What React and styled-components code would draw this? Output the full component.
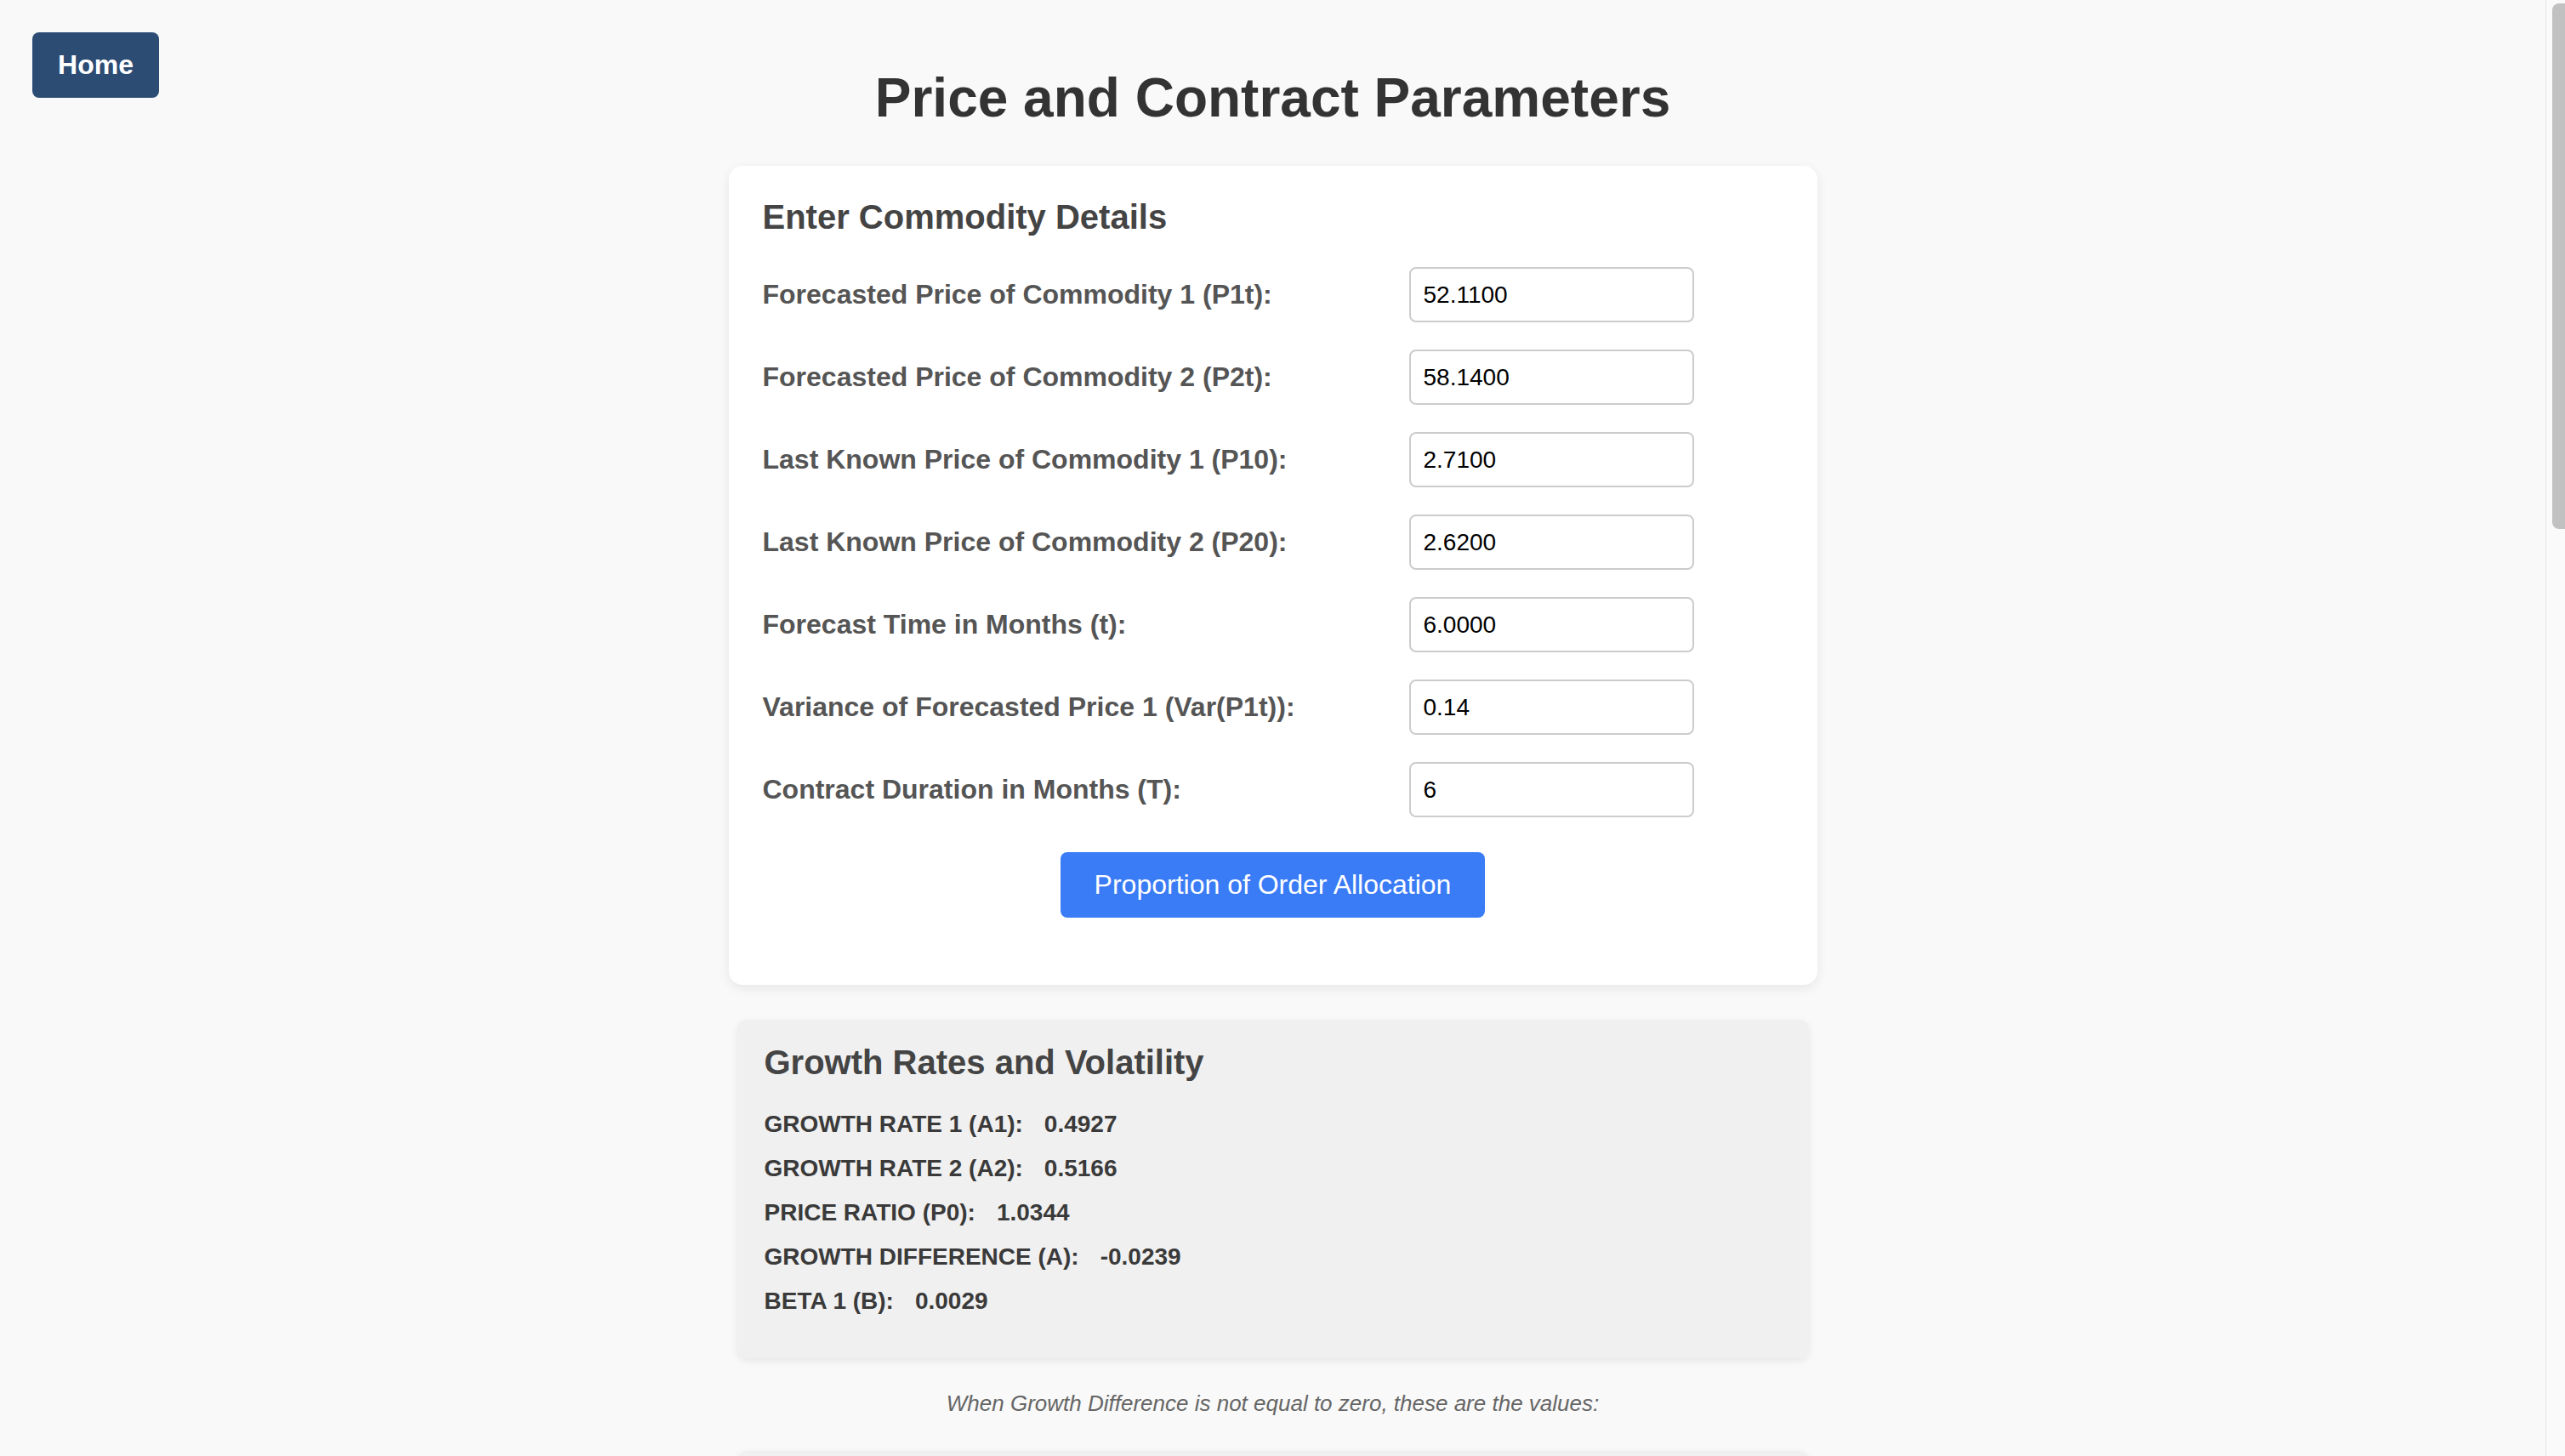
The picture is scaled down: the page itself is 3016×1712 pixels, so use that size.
import React from "react";
import styled, { createGlobalStyle } from "styled-components";

const GlobalStyle = createGlobalStyle`
  html,
  body {
    margin: 0;
    padding: 0;
    background: #f9f9f9;
    scrollbar-width: none;
  }
  body {
    font-family: "Liberation Sans", Arial, Helvetica, sans-serif;
    color: #333;
  }
  ::-webkit-scrollbar {
    display: none;
  }
`;

const fields = [
  { label: "Forecasted Price of Commodity 1 (P1t):", value: "52.1100" },
  { label: "Forecasted Price of Commodity 2 (P2t):", value: "58.1400" },
  { label: "Last Known Price of Commodity 1 (P10):", value: "2.7100" },
  { label: "Last Known Price of Commodity 2 (P20):", value: "2.6200" },
  { label: "Forecast Time in Months (t):", value: "6.0000" },
  { label: "Variance of Forecasted Price 1 (Var(P1t)):", value: "0.14" },
  { label: "Contract Duration in Months (T):", value: "6" },
];

const growth = [
  { label: "Growth Rate 1 (A1):", value: "0.4927" },
  { label: "Growth Rate 2 (A2):", value: "0.5166" },
  { label: "Price Ratio (P0):", value: "1.0344" },
  { label: "Growth Difference (A):", value: "-0.0239" },
  { label: "Beta 1 (B):", value: "0.0029" },
];

const allocation = [
  { label: "Proportion to Supplier 1 (X1):", value: "0.4981" },
  { label: "Proportion to Supplier 2 (X2):", value: "0.5019" },
  { label: "Expected Cost Ratio (R):", value: "1.0012" },
];

const StatList = ({ items }) => (
  <Stats>
    {items.map(({ label, value }) => (
      <Stat key={label}>
        <StatLabel>{label}</StatLabel>
        <StatValue>{value}</StatValue>
      </Stat>
    ))}
  </Stats>
);

const App = () => (
  <>
    <GlobalStyle />
    <Page>
      <HomeButton type="button">Home</HomeButton>
      <Title>Price and Contract Parameters</Title>

      <FormCard>
        <CardTitle>Enter Commodity Details</CardTitle>
        <Fields>
          {fields.map(({ label, value }) => (
            <Field key={label}>
              <FieldLabel>{label}</FieldLabel>
              <Input type="text" defaultValue={value} />
            </Field>
          ))}
        </Fields>
        <Actions>
          <PrimaryButton type="button">Proportion of Order Allocation</PrimaryButton>
        </Actions>
      </FormCard>

      <ResultCard>
        <ResultTitle>Growth Rates and Volatility</ResultTitle>
        <StatList items={growth} />
      </ResultCard>

      <Note>When Growth Difference is not equal to zero, these are the values:</Note>

      <ResultCard>
        <ResultTitle>Order Allocation</ResultTitle>
        <StatList items={allocation} />
      </ResultCard>
    </Page>
    {/* window scroll rail, as the browser shows it */}
    <ScrollRail>
      <ScrollThumb />
    </ScrollRail>
  </>
);

export default App;

const Page = styled.div`
  position: relative;
  min-height: 4743px;
  box-sizing: border-box;
  padding: 78px 23px 80px 0;
  display: flex;
  flex-direction: column;
  align-items: center;
`;

const HomeButton = styled.button`
  position: absolute;
  top: 38px;
  left: 38px;
  width: 149px;
  height: 77px;
  border: none;
  border-radius: 8px;
  background: #2c4c73;
  color: #fff;
  font-family: "Liberation Sans", Arial, sans-serif;
  font-size: 32px;
  font-weight: 700;
  cursor: pointer;
`;

const Title = styled.h1`
  margin: 0 0 43px;
  font-size: 64px;
  line-height: 74px;
  font-weight: 700;
  color: #333;
  text-align: center;
`;

const FormCard = styled.section`
  width: 1280px;
  box-sizing: border-box;
  padding: 37px 40px 40px;
  background: #fff;
  border-radius: 16px;
  box-shadow: 0 4px 14px rgba(0, 0, 0, 0.08);
`;

const CardTitle = styled.h3`
  margin: 0 0 36px;
  font-size: 40px;
  line-height: 46px;
  font-weight: 700;
  color: #444;
`;

const Fields = styled.div`
  display: flex;
  flex-direction: column;
  gap: 32px;
`;

const Field = styled.div`
  display: grid;
  grid-template-columns: 760px 335px;
  align-items: center;
  height: 65px;
`;

const FieldLabel = styled.label`
  font-size: 32px;
  font-weight: 700;
  color: #555;
`;

const Input = styled.input`
  width: 335px;
  height: 65px;
  box-sizing: border-box;
  padding: 0 15px;
  border: 2px solid #ccc;
  border-radius: 8px;
  background: #fff;
  font-family: "Liberation Sans", Arial, sans-serif;
  font-size: 28px;
  color: #000;
  outline: none;
`;

const Actions = styled.div`
  display: flex;
  justify-content: center;
  margin: 41px 0 39px;
`;

const PrimaryButton = styled.button`
  height: 77px;
  padding: 0 40px;
  border: none;
  border-radius: 8px;
  background: #3a7bf6;
  color: #fff;
  font-family: "Liberation Sans", Arial, sans-serif;
  font-size: 32px;
  cursor: pointer;
`;

const ResultCard = styled.section`
  width: 1260px;
  box-sizing: border-box;
  margin-top: 41px;
  padding: 27px 32px 51px;
  background: #f0f0f0;
  border-radius: 12px;
  box-shadow: 0 3px 10px rgba(0, 0, 0, 0.08);
`;

const ResultTitle = styled.h3`
  margin: 0 0 34px;
  font-size: 40px;
  line-height: 46px;
  font-weight: 700;
  color: #444;
`;

const Stats = styled.div`
  display: flex;
  flex-direction: column;
  gap: 20px;
`;

const Stat = styled.div`
  display: flex;
  gap: 25px;
  font-size: 28px;
  line-height: 32px;
  font-weight: 700;
  color: #3a3a3a;
`;

const StatLabel = styled.span`
  text-transform: uppercase;
`;

const StatValue = styled.span``;

const Note = styled.p`
  margin: 38px 0 0;
  font-size: 26px;
  line-height: 30px;
  font-style: italic;
  color: #666;
  text-align: center;
`;

const ScrollRail = styled.div`
  position: fixed;
  top: 0;
  right: 0;
  bottom: 0;
  width: 23px;
  box-sizing: border-box;
  padding: 4px 0 0 7px;
  background: #fafafa;
  border-left: 1px solid #e6e6e6;
`;

const ScrollThumb = styled.div`
  height: 618px;
  border-radius: 8px 0 0 8px;
  background: #c1c1c1;
`;
